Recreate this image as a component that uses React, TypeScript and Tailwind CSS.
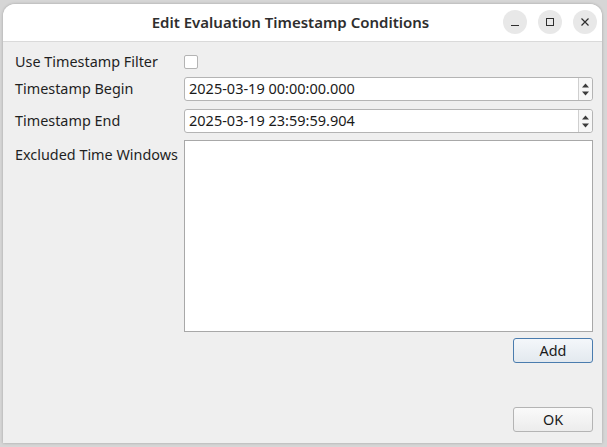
import React from 'react'

const font = { fontFamily: '"Noto Sans", "Open Sans", sans-serif' }

function SpinBox({ value }: { value: string }) {
  return (
    <div className="flex h-[24px] w-full rounded-[3px] border border-[#b4b4b4] bg-white">
      <div className="flex flex-1 items-center pl-[4px] text-[14.5px] text-[#1a1a1a]">{value}</div>
      <div className="flex w-[14px] flex-col items-center justify-center gap-[3px] border-l border-[#cfcfcf] bg-[#f7f7f7] rounded-r-[3px]">
        <svg width="7" height="5" viewBox="0 0 7 5">
          <path d="M3.5 0.5 L7 4.5 L0 4.5 Z" fill="#3c3c3c" />
        </svg>
        <svg width="7" height="5" viewBox="0 0 7 5">
          <path d="M0 0.5 L7 0.5 L3.5 4.5 Z" fill="#3c3c3c" />
        </svg>
      </div>
    </div>
  )
}

function TitleButton({ kind }: { kind: 'min' | 'max' | 'close' }) {
  return (
    <div className="flex h-[24px] w-[24px] items-center justify-center rounded-full bg-[#e8e8e8]">
      {kind === 'min' && (
        <svg width="10" height="10" viewBox="0 0 10 10">
          <path d="M1 8.5 H9" stroke="#2e2e2e" strokeWidth="1" />
        </svg>
      )}
      {kind === 'max' && (
        <svg width="10" height="10" viewBox="0 0 10 10">
          <rect x="1.5" y="1.5" width="7" height="7" fill="none" stroke="#2e2e2e" strokeWidth="1" />
        </svg>
      )}
      {kind === 'close' && (
        <svg width="10" height="10" viewBox="0 0 10 10">
          <path d="M1.5 1.5 L8.5 8.5 M8.5 1.5 L1.5 8.5" stroke="#2e2e2e" strokeWidth="1.2" />
        </svg>
      )}
    </div>
  )
}

export default function App() {
  return (
    <div className="h-[447px] w-[607px] overflow-hidden bg-[#d6d6d6] pl-[3px] pr-[5px] pt-[4px] pb-[4px]" style={font}>
      <div className="flex h-full flex-col overflow-hidden rounded-t-[12px] bg-[#efefef] shadow-[0_0_3px_rgba(0,0,0,0.25)]">
        <div className="relative flex h-[38px] shrink-0 items-center justify-center border-b border-[#dadada] bg-white pr-[24px]">
          <span className="text-[15px] font-semibold text-[#2e2e2e]">Edit Evaluation Timestamp Conditions</span>
          <div className="absolute right-[5px] top-[6px] flex gap-[11px]">
            <TitleButton kind="min" />
            <TitleButton kind="max" />
            <TitleButton kind="close" />
          </div>
        </div>

        <div className="flex flex-1 flex-col pl-[12px] pr-[9px] pt-[13px] pb-[11px] text-[14.4px] text-[#1f1f1f]">
          <div className="grid grid-cols-[169px_1fr] items-center gap-y-[8px]">
            <span className="leading-[14px]">Use Timestamp Filter</span>
            <div className="h-[14px] w-[14px] rounded-[2px] border border-[#b4b4b4] bg-white" />
            <span>Timestamp Begin</span>
            <SpinBox value="2025-03-19 00:00:00.000" />
            <span>Timestamp End</span>
            <SpinBox value="2025-03-19 23:59:59.904" />
          </div>
          <div className="mt-[7px] grid grid-cols-[169px_1fr]">
            <span className="pt-[4px]">Excluded Time Windows</span>
            <div className="h-[192px] border border-[#a8a8a8] bg-white" />
          </div>
          <div className="mt-[6px] flex justify-end">
            <button className="h-[25px] w-[80px] rounded-[3px] border border-[#4a7cae] bg-gradient-to-b from-[#f4f7fa] to-[#e3e9ef] text-[14.4px] text-[#1a1a1a]">
              Add
            </button>
          </div>
          <div className="flex-1" />
          <div className="flex justify-end">
            <button className="h-[25px] w-[80px] rounded-[3px] border border-[#b4b4b4] bg-gradient-to-b from-[#fafafa] to-[#ececec] text-[14.4px] text-[#1a1a1a]">
              OK
            </button>
          </div>
        </div>
      </div>
    </div>
  )
}
